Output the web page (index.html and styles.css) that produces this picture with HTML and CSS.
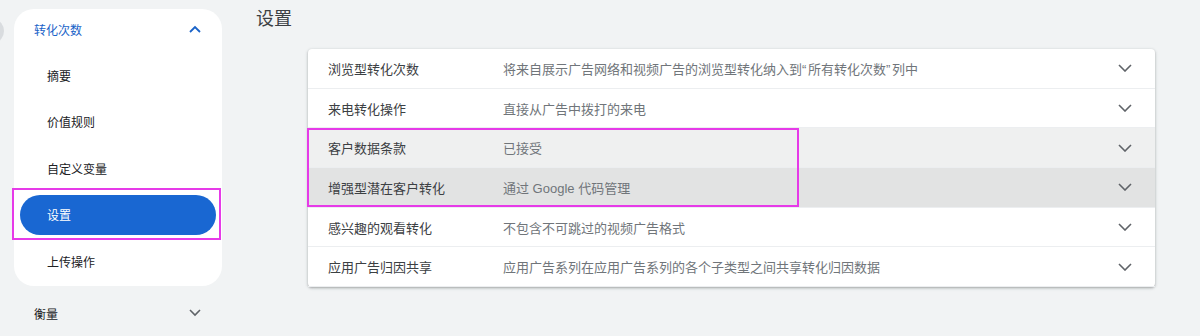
FILE: index.html
```html
<!DOCTYPE html>
<html lang="zh-CN">
<head>
<meta charset="utf-8">
<link rel="stylesheet" href="styles.css">
</head>
<body>
<div class="page">
  <div class="edge-blob"></div>
  <aside class="sidebar">
    <div class="nav-card">
      <div class="nav-head">
        <span class="nav-head-title">转化次数</span>
        <svg class="chev" width="12" height="8" viewBox="0 0 12 8"><path d="M1 7 L6 2 L11 7" fill="none" stroke="#1a63c8" stroke-width="1.8"/></svg>
      </div>
      <div class="nav-items">
        <div class="nav-item">摘要</div>
        <div class="nav-item">价值规则</div>
        <div class="nav-item">自定义变量</div>
        <div class="nav-item active">设置</div>
        <div class="nav-item">上传操作</div>
      </div>
    </div>
    <div class="nav-section">
      <span>衡量</span>
      <svg class="chev" width="12" height="8" viewBox="0 0 12 8"><path d="M1 1 L6 6 L11 1" fill="none" stroke="#5f6368" stroke-width="1.6"/></svg>
    </div>
    <div class="hl hl-nav"></div>
  </aside>
  <main class="main">
    <h1 class="title">设置</h1>
    <div class="settings">
      <div class="row">
        <span class="label">浏览型转化次数</span>
        <span class="desc">将来自展示广告网络和视频广告的浏览型转化纳入到<span class="q">“</span>所有转化次数<span class="q">”</span>列中</span>
        <svg class="row-chev" width="14" height="8" viewBox="0 0 14 8"><path d="M1 1 L7 7 L13 1" fill="none" stroke="#5f6368" stroke-width="1.6"/></svg>
      </div>
      <div class="row">
        <span class="label">来电转化操作</span>
        <span class="desc">直接从广告中拨打的来电</span>
        <svg class="row-chev" width="14" height="8" viewBox="0 0 14 8"><path d="M1 1 L7 7 L13 1" fill="none" stroke="#5f6368" stroke-width="1.6"/></svg>
      </div>
      <div class="row row-hover">
        <span class="label">客户数据条款</span>
        <span class="desc">已接受</span>
        <svg class="row-chev" width="14" height="8" viewBox="0 0 14 8"><path d="M1 1 L7 7 L13 1" fill="none" stroke="#5f6368" stroke-width="1.6"/></svg>
      </div>
      <div class="row row-press">
        <span class="label">增强型潜在客户转化</span>
        <span class="desc">通过 Google 代码管理</span>
        <svg class="row-chev" width="14" height="8" viewBox="0 0 14 8"><path d="M1 1 L7 7 L13 1" fill="none" stroke="#5f6368" stroke-width="1.6"/></svg>
      </div>
      <div class="row">
        <span class="label">感兴趣的观看转化</span>
        <span class="desc">不包含不可跳过的视频广告格式</span>
        <svg class="row-chev" width="14" height="8" viewBox="0 0 14 8"><path d="M1 1 L7 7 L13 1" fill="none" stroke="#5f6368" stroke-width="1.6"/></svg>
      </div>
      <div class="row">
        <span class="label">应用广告归因共享</span>
        <span class="desc">应用广告系列在应用广告系列的各个子类型之间共享转化归因数据</span>
        <svg class="row-chev" width="14" height="8" viewBox="0 0 14 8"><path d="M1 1 L7 7 L13 1" fill="none" stroke="#5f6368" stroke-width="1.6"/></svg>
      </div>
      <div class="hl hl-rows"></div>
    </div>
  </main>
</div>
</body>
</html>
```

FILE: styles.css
```css
* { box-sizing: border-box; }
html, body {
  margin: 0;
  padding: 0;
  background: #f1f3f4;
  font-family: "Liberation Sans", "Noto Sans CJK SC", sans-serif;
  color: #3c4043;
}
.page {
  position: relative;
  width: 1200px;
  height: 336px;
  overflow: hidden;
  display: flex;
  align-items: flex-start;
}
.edge-blob {
  position: absolute;
  left: -14px;
  top: 20px;
  width: 18px;
  height: 22px;
  border-radius: 50%;
  background: #d9dcdf;
}
.sidebar {
  position: relative;
  width: 208px;
  margin-left: 14px;
  margin-top: 9px;
  flex: none;
}
.nav-card {
  background: #fff;
  border-radius: 20px;
  padding-bottom: 5px;
}
.nav-head {
  height: 40px;
  display: flex;
  align-items: center;
  justify-content: space-between;
  padding: 0 21px 0 20px;
}
.nav-head-title {
  font-size: 12px;
  color: #1a63c8;
}
.nav-items {
  display: flex;
  flex-direction: column;
  gap: 6.5px;
  padding: 6px 6px 0;
}
.nav-item {
  height: 40px;
  border-radius: 20px;
  display: flex;
  align-items: center;
  padding-left: 27px;
  font-size: 12px;
  color: #202124;
}
.nav-item.active {
  background: #1967d2;
  color: #fff;
}
.nav-section {
  height: 40px;
  margin-top: 7px;
  display: flex;
  align-items: center;
  justify-content: space-between;
  padding: 0 21px 0 20px;
  font-size: 12px;
  color: #202124;
}
.main {
  margin-left: 34px;
  flex: none;
}
.title {
  margin: 7px 0 0;
  font-size: 18px;
  font-weight: 400;
  line-height: 24px;
  color: #3c4043;
}
.settings {
  position: relative;
  margin-top: 18px;
  margin-left: 52px;
  width: 847px;
  background: #fff;
  border-radius: 4px;
  box-shadow: 0 1px 2px rgba(60,64,67,.3), 0 1px 3px 1px rgba(60,64,67,.12);
}
.row {
  height: 39.7px;
  display: flex;
  align-items: center;
  padding-left: 20px;
  font-size: 13px;
  border-bottom: 1px solid #eceef0;
}
.row:first-child { border-radius: 4px 4px 0 0; }
.row:last-of-type { border-bottom: none; border-radius: 0 0 4px 4px; }
.row-hover { background: #eff0f0; }
.row-press { background: #e2e3e3; }
.label {
  width: 175px;
  flex: none;
  color: #3c4043;
}
.desc {
  flex: 1;
  color: #70757a;
}
.q {
  display: inline-block;
  width: 6px;
}
.row-chev {
  margin-right: 23px;
  flex: none;
}
.hl {
  position: absolute;
  border: 2px solid #e63ae8;
  pointer-events: none;
}
.hl-nav {
  left: -2px;
  top: 179px;
  width: 209px;
  height: 52px;
}
.hl-rows {
  left: -1px;
  top: 79px;
  width: 492px;
  height: 79px;
}
```
